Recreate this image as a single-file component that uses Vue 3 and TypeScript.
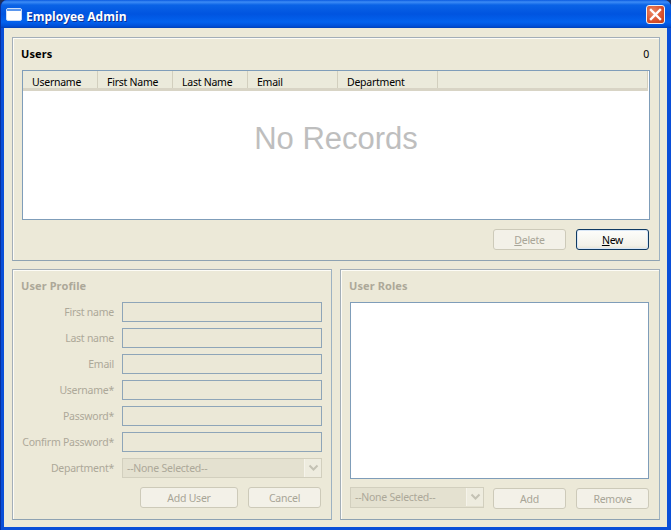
<template>
    <div class="window">
        <div class="titlebar">
            <svg class="app-icon" width="16" height="14" viewBox="0 0 16 14">
                <rect x="0.5" y="0.5" width="15" height="12" rx="1.5" fill="#ffffff" stroke="#c9dcf8" />
                <rect x="1" y="1" width="14" height="2" fill="#5a96ee" />
            </svg>
            <span class="title">Employee Admin</span>
            <div class="close">
                <svg width="13" height="13" viewBox="0 0 13 13">
                    <path d="M2 2 L11 11 M11 2 L2 11" stroke="#ffffff" stroke-width="2.4" stroke-linecap="square" />
                </svg>
            </div>
        </div>
        <div class="body">
            <section class="panel users">
                <div class="panel-head">
                    <span class="panel-title">Users</span>
                    <span class="count">{{ users.length }}</span>
                </div>
                <div class="grid">
                    <div class="grid-head">
                        <div v-for="col in columns" :key="col.name" class="col" :style="{ width: col.width + 'px' }">{{ col.name }}</div>
                        <div class="col-fill"></div>
                    </div>
                    <div class="grid-body">No Records</div>
                </div>
                <div class="actions">
                    <button class="btn off small"><u>D</u>elete</button>
                    <button class="btn focus small"><u>N</u>ew</button>
                </div>
            </section>
            <div class="lower">
                <section class="panel half">
                    <div class="panel-title off-text head-gap">User Profile</div>
                    <div class="form">
                        <div v-for="f in fields" :key="f" class="row">
                            <label>{{ f }}</label>
                            <div class="input"></div>
                        </div>
                        <div class="row select-row">
                            <label>Department*</label>
                            <div class="select wide">
                                <span class="select-text">--None Selected--</span>
                                <span class="arrow">
                                    <svg width="11" height="8" viewBox="0 0 11 8"><path d="M1.5 1.5 L5.5 5.5 L9.5 1.5" fill="none" stroke="#c4c2b4" stroke-width="2" /></svg>
                                </span>
                            </div>
                        </div>
                    </div>
                    <div class="actions form-actions">
                        <button class="btn off add-user">Add User</button>
                        <button class="btn off small">Cancel</button>
                    </div>
                </section>
                <section class="panel half">
                    <div class="panel-title off-text head-gap">User Roles</div>
                    <div class="roles"></div>
                    <div class="roles-foot">
                        <div class="select short">
                            <span class="select-text">--None Selected--</span>
                            <span class="arrow">
                                <svg width="11" height="8" viewBox="0 0 11 8"><path d="M1.5 1.5 L5.5 5.5 L9.5 1.5" fill="none" stroke="#c4c2b4" stroke-width="2" /></svg>
                            </span>
                        </div>
                        <button class="btn off small">Add</button>
                        <button class="btn off small">Remove</button>
                    </div>
                </section>
            </div>
        </div>
    </div>
</template>

<script setup lang="ts">
interface Column {
    name: string;
    width: number;
}
const users: string[] = [];
const columns: Column[] = [
    { name: "Username", width: 75 },
    { name: "First Name", width: 75 },
    { name: "Last Name", width: 75 },
    { name: "Email", width: 90 },
    { name: "Department", width: 100 }
];
const fields = ["First name", "Last name", "Email", "Username*", "Password*", "Confirm Password*"];
</script>

<style>
html, body {
    margin: 0;
    overflow: hidden;
    background: #20305a;
}
</style>

<style scoped>
.window {
    width: 671px;
    height: 530px;
    box-sizing: border-box;
    display: flex;
    flex-direction: column;
    background: #0a4fd8;
    border-radius: 7px 7px 0 0;
    padding: 0 4px 3px 3px;
    border-left: 1px solid #0831a0;
    font-family: "Noto Sans", "Open Sans", sans-serif;
    font-size: 10.5px;
    letter-spacing: -0.25px;
    color: #000000;
    overflow: hidden;
}

.titlebar {
    height: 28px;
    flex: none;
    margin: 0 -4px 0 -3px;
    padding: 0 6px 0 5px;
    display: flex;
    align-items: center;
    background: linear-gradient(#0a5ae0 0, #3d8cf6 2px, #0a63e6 5px, #0054e0 14px, #0362ee 22px, #0050d8 26px, #0040b8 28px);
}

.app-icon {
    flex: none;
    margin: 2px 4px 0 0;
}

.title {
    flex: 1;
    color: #ffffff;
    font-family: "Open Sans", "Noto Sans", sans-serif;
    font-weight: 700;
    font-size: 12px;
    letter-spacing: 0;
    padding-top: 4px;
    text-shadow: 1px 1px 0 #0a2f96;
}

.close {
    width: 19px;
    height: 19px;
    box-sizing: border-box;
    border: 1px solid #f0f0f0;
    border-radius: 3px;
    background: radial-gradient(circle at 35% 35%, #ec8a66, #d8502c 60%, #bc3a16);
    display: flex;
    align-items: center;
    justify-content: center;
}

.body {
    flex: 1;
    background: #ece9d8;
    padding: 9px 7px 7px 8px;
    display: flex;
    flex-direction: column;
    gap: 8px;
}

.panel {
    box-sizing: border-box;
    border: 1px solid #8a9bad;
    border-color: #a3aeb8 #9db2c2 #8ea2b2 #a3aeb8;
    box-shadow: inset 1px 1px 0 #fdfcf6;
    padding: 9px;
}

.users {
    height: 224px;
}

.panel-head {
    display: flex;
    justify-content: space-between;
    height: 23px;
    line-height: 15px;
}

.panel-title {
    font-weight: 700;
    font-size: 11px;
    line-height: 13px;
    letter-spacing: 0.1px;
    margin-left: -1px;
}

.count {
    margin-right: 1px;
}

.grid {
    height: 150px;
    box-sizing: border-box;
    border: 1px solid #7f9db9;
    background: #ffffff;
    display: flex;
    flex-direction: column;
}

.grid-head {
    height: 20px;
    flex: none;
    box-sizing: border-box;
    display: flex;
    background: #ebeadb;
    border-bottom: 3px solid #d8d4c5;
    margin-right: 1px;
}

.col {
    box-sizing: border-box;
    height: 17px;
    line-height: 23px;
    padding-left: 9px;
    white-space: nowrap;
    border-right: 1px solid #d2cfbe;
}

.col-fill {
    flex: 1;
    border-right: 1px solid #d2cfbe;
}

.grid-body {
    flex: 1;
    text-align: center;
    font-family: "Liberation Sans", Arial, sans-serif;
    font-size: 31px;
    letter-spacing: 0;
    color: #bebebe;
    padding-top: 30px;
    box-sizing: border-box;
}

.actions {
    display: flex;
    justify-content: flex-end;
    gap: 10px;
    margin: 9px 1px 0 0;
}

.btn {
    height: 21px;
    box-sizing: border-box;
    border-radius: 3px;
    padding: 0;
    font: inherit;
    letter-spacing: inherit;
    cursor: default;
    background: linear-gradient(#fdfdfb, #f3f2ea 80%, #e6e3d4);
}

.small {
    width: 73px;
}

.add-user {
    width: 98px;
}

.off {
    border: 1px solid #cdcab9;
    color: #a8a597;
    background: #f3f1e8;
}

.focus {
    border: 1px solid #0f3a62;
    color: #000000;
    box-shadow: inset 0 0 0 1px #d8e6f6;
}

.lower {
    display: flex;
    gap: 8px;
    flex: 1;
}

.half {
    width: 320px;
    flex: none;
    height: 251px;
}

.off-text {
    color: #aca899;
}

.head-gap {
    height: 23px;
}

.form {
    display: flex;
    flex-direction: column;
    gap: 6px;
}

.row {
    display: flex;
    align-items: center;
    height: 20px;
}

.row label {
    width: 92px;
    flex: none;
    text-align: right;
    color: #aca899;
    white-space: nowrap;
}

.input {
    margin-left: 8px;
    width: 200px;
    height: 20px;
    box-sizing: border-box;
    border: 1px solid #8ea5b8;
    background: #ebe8d7;
}

.select {
    box-sizing: border-box;
    height: 20px;
    border: 1px solid #d2cfbe;
    background: #e4e1d0;
    display: flex;
    align-items: center;
    color: #aca899;
}

.wide {
    margin-left: 8px;
    width: 200px;
}

.short {
    width: 134px;
    height: 21px;
    margin-top: -1px;
    padding-bottom: 1px;
}

.select-text {
    flex: 1;
    padding-left: 4px;
}

.arrow {
    width: 17px;
    height: 100%;
    box-sizing: border-box;
    border-left: 1px solid #f5f3ea;
    background: #eeecdf;
    display: flex;
    align-items: center;
    justify-content: center;
}

.roles {
    height: 177px;
    box-sizing: border-box;
    border: 1px solid #7f9db9;
    background: #ffffff;
    margin-right: 1px;
}

.roles-foot {
    display: flex;
    gap: 10px;
    margin-top: 9px;
    margin-right: 1px;
}

.roles-foot .short {
    margin-right: -1px;
}
</style>
